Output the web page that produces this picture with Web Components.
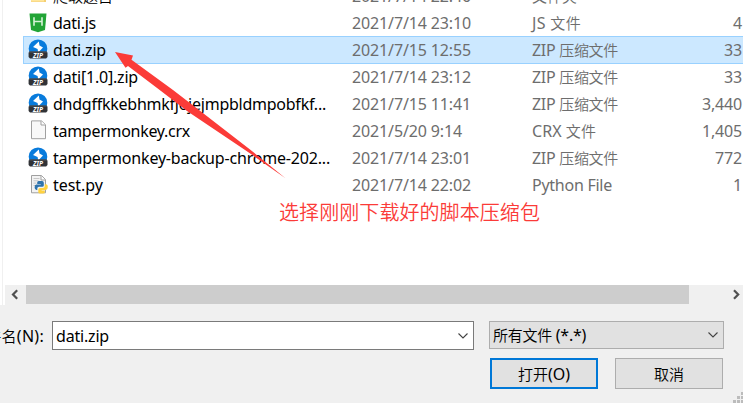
<!DOCTYPE html>
<html lang="zh-CN">
<head>
<meta charset="utf-8">
<title>打开</title>
<style>
html,body{margin:0;width:743px;height:403px;overflow:hidden;background:#fff}
body{font:16px/20px "Noto Sans","Noto Sans CJK SC",sans-serif;color:#000}
</style>
</head>
<body>
<file-dialog></file-dialog>
<script>
const define = (name, html, setup) => {
  const t = document.createElement('template');
  t.innerHTML = html;
  customElements.define(name, class extends HTMLElement {
    connectedCallback() {
      if (this.shadowRoot) return;
      this.attachShadow({mode: 'open'}).append(t.content.cloneNode(true));
      if (setup) setup(this, this.shadowRoot);
    }
  });
};

/* Text run tracked to a given advance width; Han characters are set slightly smaller than Latin. */
define('fit-text', `<style>:host{display:inline-block;white-space:pre;flex:none}span{display:inline-block}b{font-family:"Noto Sans CJK SC",sans-serif;font-weight:350;font-size:var(--han,15px);line-height:1}</style><span></span>`, (el, root) => {
  const s = root.querySelector('span');
  const text = el.getAttribute('text');
  s.innerHTML = text.replace(/[\u4e00-\u9fff]+/g, '<b>$&</b>');
  const w = +el.getAttribute('w'), n = [...text].length;
  if (w) s.style.letterSpacing = (w - s.getBoundingClientRect().width) / n + 'px';
});

const icons = {
  folder: `<path fill="#f4cf72" d="M3 2h6l2 2h7v13H3z"/><path fill="#ffe69c" d="M5 4h11v12.5H3z"/>`,
  js: `<path fill="#22a436" d="M1.5 1.5h17L17 18l-7 2.2L3 18z"/><path fill="none" stroke="#d6f3d8" stroke-width="1.6" d="M6 5.2v8.6M14 5.2v8.6M6 9.5h8"/>`,
  zip: `<circle cx="10" cy="9.7" r="9.3" fill="#087bdc"/><path fill="#fff" d="m10.8 2.4.7 4 3.5 2.2-4.8 4.9-.6-3.6L5 8z"/><path fill="#303236" d="M1.5 12.4h17l1 1.3v4.3l-1.4 1.4H2L.6 18v-4.3z"/><path fill="#55585d" d="M1.5 12.4h17l.7 1H.8z"/>`,
  page: `<path fill="#f8f8f8" stroke="#a0a0a0" d="M3.5.9h10l4 3.8v14H3.5z"/><path fill="#fff" stroke="#a0a0a0" d="M13 1v4h4.5"/>`,
  py: `<path fill="#f3f3f3" stroke="#a0a0a0" d="M3.5 1.5h10l4 4v13.3H3.5z"/><path fill="#fff" stroke="#a0a0a0" d="M13 1.7V6h4.5"/><path stroke="#bdbdbd" stroke-width=".8" d="M5.5 4.5h6M5.5 6.8h5M5.5 9.1h3M5.5 11.5h2"/><path fill="#2e73ac" d="M10.7 7h3.4q1.7 0 1.7 1.7v2.7q0 1.4-1.6 1.4H11q-1.7 0-1.7 1.8V16H8.4q-1.8 0-1.8-2.7t1.8-2.7h4.4V10H9.2V8.6Q9.2 7 10.7 7z"/><path fill="#ffd23f" d="M16.7 10.3h1.2q1.9 0 1.9 2.8T17.9 16h-4.3v.6h3.2v1.3q0 1.7-1.8 1.7h-3q-1.7 0-1.7-1.7v-2.3q0-1.7 1.7-1.7h3q1.7 0 1.7-1.6z"/>`
};
define('file-icon', `<style>:host{display:grid;width:20px;height:20px;flex:none}svg,span{grid-area:1/1}svg{overflow:visible}span{align-self:end;justify-self:center;font:italic 700 6.5px/7px "Noto Sans",sans-serif;color:#fff;margin-bottom:0}</style><svg width="20" height="20" viewBox="0 0 20 20"></svg>`, (el, root) => {
  const k = el.getAttribute('kind');
  root.querySelector('svg').innerHTML = icons[k];
  if (k === 'zip') { const s = document.createElement('span'); s.textContent = 'ZIP'; root.append(s); }
});

define('scroll-bar', `<style>:host{display:flex;height:19px;margin-left:5px;background:#f0f0f0;justify-content:space-between;align-items:stretch}i{flex:0 0 663px;background:#cdcdcd}svg{flex:none}</style>
<svg width="21" height="19"><path d="M12.2 5.2 8 9.5l4.2 4.3" fill="none" stroke="#505050" stroke-width="2.2"/></svg><i></i><svg width="54" height="19"><path d="m45 5.2 4.2 4.3-4.2 4.3" fill="none" stroke="#505050" stroke-width="2.2"/></svg>`);

define('combo-box', `<style>:host{display:flex;box-sizing:border-box;border:1px solid #7a7a7a;background:#fff;width:422px;height:29px;align-items:center;justify-content:space-between;padding:0 4px 0 3px}:host([flat]){background:#e1e1e1;border-color:#adadad;width:235px;height:28px}</style><slot></slot><svg width="12" height="8"><path d="m1.5 1.5 4.5 4.5 4.5-4.5" fill="none" stroke="#444" stroke-width="1.1"/></svg>`);

define('push-button', `<style>:host{display:flex;box-sizing:border-box;width:108px;height:31px;border:1px solid #adadad;background:#e1e1e1;align-items:center;justify-content:center}:host([primary]){border:2px solid #0078d7}</style><slot></slot>`);

define('pointer-arrow', `<style>:host{position:absolute;left:0;top:0;pointer-events:none}svg{display:block}</style><svg width="300" height="190"><path fill="#fb3b38" d="m115 52 18 3.5-1.5 4.3L173 90l26 20 51 39.5 35.5 28.7L248 152l-61-41-26-20-33-25-2.5 1.8z"/></svg>`);

define('size-grip', `<style>:host{position:absolute;right:0;bottom:0}svg{display:block}</style><svg width="10" height="11"><path fill="#bcbcbc" d="M8 0h3v3H8zM4 4h3v3H4zM8 4h3v3H8zM0 8h3v3H0zM4 8h3v3H4zM8 8h3v3H8z"/></svg>`);

define('list-row', `<style>
:host{display:grid;grid-template-columns:25px 299px 180px 1fr auto;height:27px;box-sizing:border-box;padding:1px 1px 0 5px;align-items:center;margin-left:23px;color:#6d6d6d}
:host([selected]){background:#cce8ff;box-shadow:inset 0 1px #99d1ff,inset 1px 0 #99d1ff,0 1px #99d1ff}
::slotted(.name){color:#000}
::slotted(file-icon){margin-top:-3px}
</style><slot></slot>`);

const files = [
  ['folder', ['爬取题目', 60], ['2021/7/14 22:46', 119], ['文件夹', 45], ['', 0]],
  ['js', ['dati.js', 43], ['2021/7/14 23:10', 119], ['JS 文件', 49], ['4', 9]],
  ['zip', ['dati.zip', 53], ['2021/7/15 12:55', 119], ['ZIP 压缩文件', 86], ['33', 18]],
  ['zip', ['dati[1.0].zip', 85], ['2021/7/14 23:12', 119], ['ZIP 压缩文件', 86], ['33', 18]],
  ['zip', ['dhdgffkkebhmkfjojejmpbldmpobfkf...', 273], ['2021/7/15 11:41', 119], ['ZIP 压缩文件', 86], ['3,440', 40]],
  ['page', ['tampermonkey.crx', 137], ['2021/5/20 9:14', 110], ['CRX 文件', 64], ['1,405', 40]],
  ['zip', ['tampermonkey-backup-chrome-202...', 277], ['2021/7/14 23:01', 119], ['ZIP 压缩文件', 86], ['772', 27]],
  ['py', ['test.py', 50], ['2021/7/14 22:02', 119], ['Python File', 80], ['1', 9]]
];
customElements.define('file-list', class extends HTMLElement {
  connectedCallback() {
    const cell = ([t, w], c) => `<fit-text class="${c}" text="${t}" w="${w}"></fit-text>`;
    this.attachShadow({mode: 'open'}).innerHTML = `<style>
    :host{display:block;height:285px;overflow:hidden}
    .rows{margin-top:-18px}
    list-row[selected]{position:relative}
    </style><div class="rows">${files.map(([k, n, d, t, s], i) =>
      `<list-row ${i === 2 ? 'selected' : ''}><file-icon kind="${k}"></file-icon>${cell(n, 'name')}${cell(d, 'date')}${cell(t, 'type')}${cell(s, 'size')}</list-row>`).join('')}</div>`;
  }
});

define('file-dialog', `<style>
:host{display:block;position:relative;width:743px;height:403px;overflow:hidden}
.view{height:305px;background:linear-gradient(90deg,transparent 2px,#f0f0f0 2px,#f0f0f0 3px,transparent 3px)}
.foot{background:#f0f0f0;height:98px;margin-top:-1px;padding-bottom:1px;clip-path:polygon(5px 0,100% 0,100% 100%,0 100%,0 1px,5px 1px)}
.line{display:flex;padding-top:17px;align-items:flex-start}
.label{width:44px;display:flex;justify-content:flex-end;margin-right:8px;padding-top:5px}
combo-box[flat]{margin-left:15px}
.actions{display:flex;gap:17px;margin:8px 0 0 490px}
.note{--han:20px;position:absolute;left:279px;top:198px;font:20px/28px "Noto Sans CJK SC",sans-serif;color:#fb3b38}
</style>
<div class="view"><file-list></file-list><scroll-bar></scroll-bar></div>
<div class="foot"><div class="line"><div class="label"><fit-text text="文件名(N):" w="73"></fit-text></div><combo-box><fit-text text="dati.zip" w="53"></fit-text></combo-box><combo-box flat><fit-text text="所有文件 (*.*)" w="93"></fit-text></combo-box></div>
<div class="actions"><push-button primary><fit-text text="打开(O)" w="52"></fit-text></push-button><push-button><fit-text text="取消" w="30"></fit-text></push-button></div></div>
<pointer-arrow></pointer-arrow><fit-text class="note" text="选择刚刚下载好的脚本压缩包" w="261"></fit-text><size-grip></size-grip>`);
</script>
</body>
</html>
